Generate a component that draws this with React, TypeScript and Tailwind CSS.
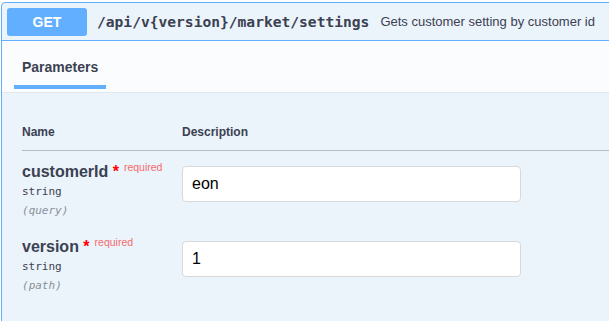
import React from "react";

const sans = { fontFamily: '"Liberation Sans", Arial, sans-serif' };
const mono = { fontFamily: '"DejaVu Sans Mono", monospace' };

type Param = { name: string; type: string; where: string; value: string };

const params: Param[] = [
  { name: "customerId", type: "string", where: "query", value: "eon" },
  { name: "version", type: "string", where: "path", value: "1" },
];

function ParamRow({ p }: { p: Param }) {
  return (
    <div className="flex pt-[12px] pb-[7px]">
      <div className="w-[160px] shrink-0">
        <div className="h-[18px] leading-[18px] whitespace-nowrap">
          <span className="text-[16px] font-bold text-[#3b4151]">{p.name}</span>
          <span className="text-[16px] font-bold text-[#ff0000]">{"\u00a0*"}</span>
          <span className="relative -top-[6px] pl-[5px] text-[10.5px] text-[#f56b6b]">required</span>
        </div>
        <div style={mono} className="mt-[3px] h-[16px] text-[11px] leading-[16px] text-[#3b4151]">
          {p.type}
        </div>
        <div style={mono} className="mt-[3px] h-[16px] text-[11px] italic leading-[16px] text-[#8a9099]">
          ({p.where})
        </div>
      </div>
      <div className="pt-[3px]">
        <input
          readOnly
          value={p.value}
          className="h-[36px] w-[339px] rounded-[4px] border border-[#d9d9d9] bg-white pl-[9px] text-[16px] text-black outline-none"
          style={sans}
        />
      </div>
    </div>
  );
}

export default function App() {
  return (
    <div style={sans} className="h-[321px] w-[609px] overflow-hidden bg-white pl-[1px] pt-[2px]">
      <div className="h-[340px] w-[720px] rounded-tl-[4px] border border-[#61affe] bg-[#ebf3fb]">
        <div className="flex items-center border-b border-[#61affe] pl-[5px] pt-[5px] pb-[4px]">
          <div className="flex h-[28px] w-[80px] items-center justify-center rounded-[3px] bg-[#61affe] text-[14px] font-bold text-white">
            GET
          </div>
          <div style={mono} className="ml-[10px] text-[14.6px] font-bold text-[#3b4151] whitespace-nowrap">
            /api/v{"{version}"}/market/settings
          </div>
          <div className="ml-[11px] text-[13px] text-[#3b4151] whitespace-nowrap">
            Gets customer setting by customer id
          </div>
        </div>

        <div className="border-b border-[#e1e6ec] bg-[#fafcfe] pl-[12px] pt-[18px] pb-[3px]">
          <div className="inline-block align-top">
            <div className="px-[8px] text-[14px] font-bold leading-[16px] text-[#3b4151]">Parameters</div>
            <div className="mt-[10px] h-[4px] bg-[#61affe]" />
          </div>
        </div>

        <div className="px-[20px]">
          <div className="flex border-b border-[#b4bcc7] pt-[32px] pb-[11px] text-[12px] font-bold leading-[14px] text-[#3b4151]">
            <div className="w-[160px]">Name</div>
            <div>Description</div>
          </div>
          {params.map((p) => (
            <ParamRow key={p.name} p={p} />
          ))}
        </div>
      </div>
    </div>
  );
}
